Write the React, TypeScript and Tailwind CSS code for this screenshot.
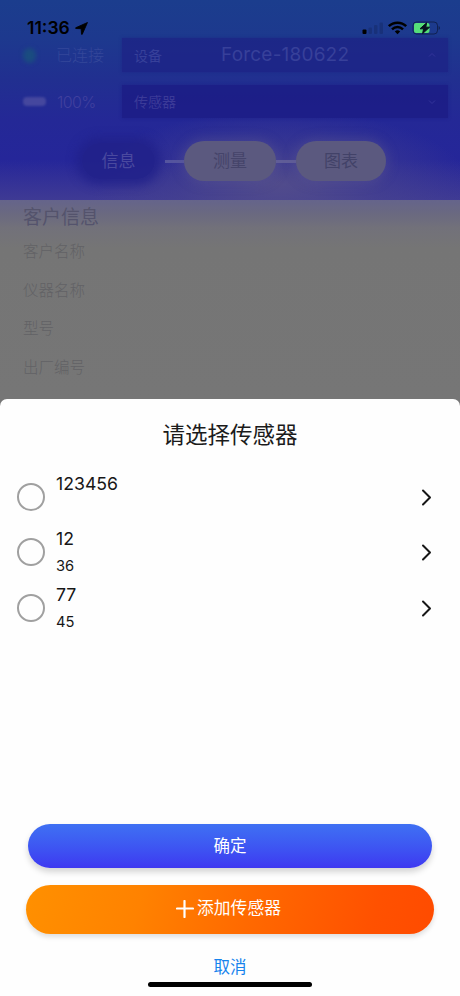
import React from "react";

const sensors = [
  { name: "123456", detail: "" },
  { name: "12", detail: "36" },
  { name: "77", detail: "45" },
];

const infoLabels = ["客户名称", "仪器名称", "型号", "出厂编号"];

function LocationArrow() {
  return (
    <svg className="ml-[5px] h-[13px] w-[13px]" viewBox="0 0 12 12">
      <path d="M11.5 0.5 L0.7 5.3 Q0.2 5.8 0.8 6 L5.7 6.2 L6 11.2 Q6.2 11.8 6.7 11.3 Z" fill="#000" stroke="#000" strokeWidth="0.8" strokeLinejoin="round" />
    </svg>
  );
}

function StatusIcons() {
  return (
    <svg className="h-[14px] w-[78px]" viewBox="0 0 78 14">
      <g>
        <rect x="0.5" y="8.5" width="4" height="4.5" rx="1" fill="#000" />
        <rect x="6.5" y="6.5" width="3.5" height="6.5" rx="1" fill="#000" opacity="0.14" />
        <rect x="12" y="4" width="3.5" height="9" rx="1" fill="#000" opacity="0.14" />
        <rect x="17.5" y="1.5" width="3.5" height="11.5" rx="1" fill="#000" opacity="0.14" />
      </g>
      <g fill="none" stroke="#000" strokeWidth="2.5">
        <path d="M26.8 5.2 A12.5 12.5 0 0 1 44.2 5.2" />
        <path d="M30 8.3 A8 8 0 0 1 41 8.3" />
      </g>
      <path d="M32.8 10.4 A4 4 0 0 1 38.2 10.4 L35.5 13.3 Z" fill="#000" />
      <rect x="51" y="1" width="24.5" height="12" rx="3.5" fill="none" stroke="#000" strokeOpacity="0.42" />
      <path d="M76.6 5 V9 Q78 8.3 78 7 Q78 5.7 76.6 5Z" fill="#000" opacity="0.45" />
      <rect x="52" y="2" width="15.5" height="10" rx="2" fill="#55df79" />
      <path d="M64.6 1.8 L58 7.8 H61.6 L60.6 12.6 L67.6 6.2 H63.8 Z" fill="#07111e" stroke="#07111e" strokeWidth="1" strokeLinejoin="round" />
    </svg>
  );
}

function Chevron({ up = false }: { up?: boolean }) {
  return (
    <svg className="h-2 w-2" viewBox="0 0 8 8" fill="none" stroke="#33349b" strokeWidth="1">
      <path d={up ? "M1 5.5 L4 2.5 L7 5.5" : "M1 2.5 L4 5.5 L7 2.5"} />
    </svg>
  );
}

function Header() {
  return (
    <header className="h-[200px] overflow-hidden bg-[radial-gradient(ellipse_190px_74px_at_280px_184px,rgba(88,82,137,0.8),rgba(74,70,140,0.45)_55%,transparent_100%),linear-gradient(0deg,rgba(70,64,145,0.75)_0px,transparent_40px),linear-gradient(180deg,#1b3d8d_0px,#1d398e_38px,#212f90_80px,#242896_120px,#252699_160px,#29289b_200px)]">
      <div className="flex h-[38px] items-start pl-[27px] pr-5 pt-[18px]">
        <div className="flex h-5 items-center text-[17.5px] font-semibold leading-5 text-black">
          11:36
          <LocationArrow />
        </div>
        <div className="ml-auto pt-[3px]">
          <StatusIcons />
        </div>
      </div>
      <div className="flex h-[34px] items-center pr-3 text-[16px] text-[#34479a]">
        <span className="ml-[23px] h-[15px] w-[13px] rounded-full bg-[#1a4c80] blur-[2px]" />
        <span className="ml-5 w-[66px] font-light">已连接</span>
        <div className="flex h-[34px] flex-1 items-center bg-[#1c2185]/70 pl-3 pr-3 text-[#37409a] shadow-[0_0_3px_#1c218599]">
          <span className="w-[87px] text-[14px]">设备</span>
          <span className="text-[19px] tracking-[0.2px]">Force-180622</span>
          <span className="ml-auto"><Chevron up /></span>
        </div>
      </div>
      <div className="mt-[13px] flex h-[33px] items-center pr-3 text-[16px] text-[#40409f]">
        <span className="ml-[23px] h-[9px] w-[23px] rounded-sm bg-[#45479e] blur-[1px]" />
        <span className="ml-[11px] w-[65px] font-light tracking-[-0.6px]">100%</span>
        <div className="flex h-[33px] flex-1 items-center bg-[#1b1b84]/80 pl-3 pr-3 text-[#3b3a98] shadow-[0_0_3px_#1b1b8499]">
          <span className="text-[14px]">传感器</span>
          <span className="ml-auto"><Chevron /></span>
        </div>
      </div>
      <nav className="mt-[23px] flex h-10 items-center pl-[82px] text-[17px]">
        <span className="flex h-9 w-[73px] items-center justify-center rounded-full bg-[#21218a]/90 pt-[2px] text-[#4a499f] shadow-[0_0_10px_6px_#21218acc]">信息</span>
        <span className="ml-[10px] h-[3px] w-[19px] bg-[#55559f]" />
        <span className="flex h-10 w-[92px] items-center justify-center rounded-full bg-[#5b597f] pt-[2px] text-[#45446a] shadow-[0_0_12px_2px_rgba(91,87,145,0.45)]">测量</span>
        <span className="h-[3px] w-5 bg-[#605d98]" />
        <span className="flex h-10 w-[90px] items-center justify-center rounded-full bg-[#5b597f] pt-[2px] text-[#424268] shadow-[0_0_12px_2px_rgba(91,87,145,0.45)]">图表</span>
      </nav>
    </header>
  );
}

function CustomerInfo() {
  return (
    <section className="h-[198.5px] bg-[linear-gradient(180deg,#65648b_0px,#6a6980_14px,#72717a_28px,#757575_48px,#767676_100%)] pl-[23px]">
      <h2 className="pt-[6px] text-[19px] leading-6 text-[#54536c]">客户信息</h2>
      <div className="mt-[3px] flex flex-col text-[15.5px] font-light text-[#626265]">
        {infoLabels.map((label) => (
          <span key={label} className="h-[38.7px] leading-[38.7px]">{label}</span>
        ))}
      </div>
    </section>
  );
}

function SensorRow({ name, detail }: { name: string; detail: string }) {
  return (
    <li className="flex h-[55.5px] items-center pl-[17px] pr-[28px]">
      <span className="mb-px h-7 w-7 shrink-0 rounded-full border-2 border-[#a0a0a0]" />
      <div className="ml-[11px] flex h-full flex-col text-[#171717]">
        <span className="h-[28px] text-[17.7px] leading-[28px]">{name}</span>
        <span className="h-[27px] text-[14.7px] leading-[27px]">{detail}</span>
      </div>
      <svg className="ml-auto h-[17px] w-[11px]" viewBox="0 0 11 17" fill="none" stroke="#171717" strokeWidth="2" strokeLinecap="round" strokeLinejoin="round">
        <path d="M2 1.5 L9 8.5 L2 15.5" />
      </svg>
    </li>
  );
}

function SensorSheet() {
  return (
    <div className="flex h-[597.5px] flex-col rounded-t-[7px] bg-[#fefefe]">
      <h1 className="mt-[18px] text-center text-[22.5px] leading-9 text-[#1b1b1b]">请选择传感器</h1>
      <ul className="mt-[17px]">
        {sensors.map((sensor) => (
          <SensorRow key={sensor.name} {...sensor} />
        ))}
      </ul>
      <div className="mt-auto flex flex-col items-center">
        <button className="h-11 w-[404px] rounded-full bg-gradient-to-b from-[#3f70f3] to-[#3e37f1] text-[16.5px] text-white shadow-[0_4px_6px_rgba(0,0,0,0.17)]">确定</button>
        <button className="mt-[17px] flex h-[49px] w-[408px] items-center justify-center bg-[linear-gradient(105deg,#ff9000_0%,#ff8200_28%,#ff6900_55%,#ff5100_85%,#ff4b00_100%)] rounded-full pb-[2px] pr-[3px] text-[16.8px] text-white shadow-[0_3px_5px_rgba(0,0,0,0.13)]">
          <svg className="mr-[3px] h-[18px] w-[18px]" viewBox="0 0 18 18" fill="none" stroke="white" strokeWidth="2.2" strokeLinecap="round">
            <path d="M8.5 1 V17 M1 8.5 H17" />
          </svg>
          添加传感器
        </button>
        <button className="mt-[21px] h-6 text-[16.5px] leading-6 text-[#1683ed]">取消</button>
        <span className="mb-[9px] mt-[3px] h-[5px] w-[164px] rounded-full bg-black" />
      </div>
    </div>
  );
}

export default function App() {
  return (
    <main className="h-[996px] w-[460px] overflow-hidden bg-[#767676] font-['Inter','Noto_Sans_CJK_SC',sans-serif]">
      <Header />
      <CustomerInfo />
      <SensorSheet />
    </main>
  );
}
